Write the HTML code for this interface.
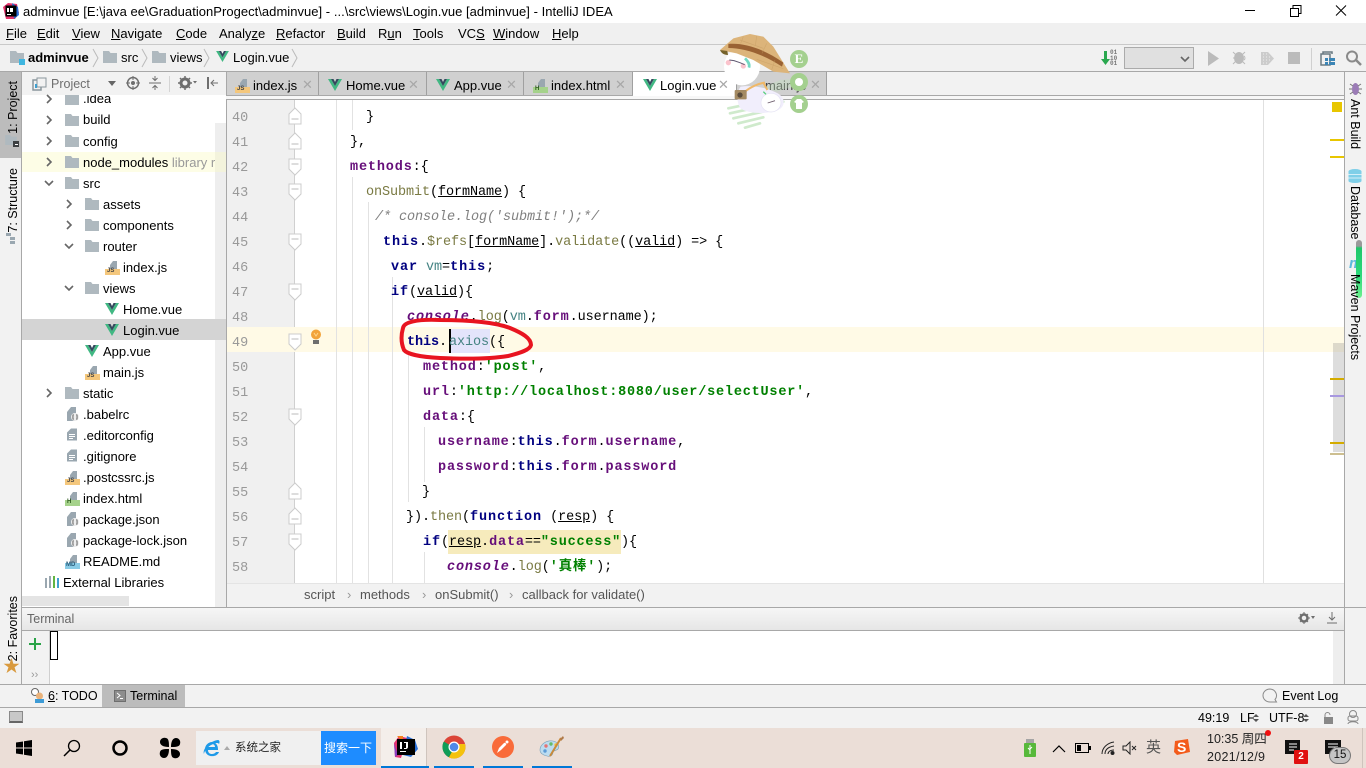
<!DOCTYPE html>
<html lang="zh"><head><meta charset="utf-8"><title>Login.vue</title>
<style>
*{box-sizing:border-box}
html,body{margin:0;padding:0;width:1366px;height:768px;overflow:hidden;background:#f2f2f2}
body{position:relative;font-family:"Liberation Sans","Noto Sans CJK SC",sans-serif;font-size:13px;color:#000}
.a,.t,.c,.ln,svg.i{position:absolute}
.t{white-space:nowrap;line-height:16px}
.c{font-family:"Liberation Mono","Noto Sans CJK SC",monospace;font-size:13.5px;white-space:pre;line-height:18px;color:#000;letter-spacing:-.1px;margin-top:1px}
.ln{font-family:"Liberation Mono",monospace;font-size:13.5px;color:#999;left:232px;line-height:18px;margin-top:2px}
.k{color:#000080;font-weight:bold;letter-spacing:.9px}.p{color:#660e7a;font-weight:bold;letter-spacing:.85px}.s{color:#008000;font-weight:bold;letter-spacing:.8px}
.f{color:#7a7a43}.u{text-decoration:underline}.v{color:#458383}
.m u{text-decoration:underline}
.vr{position:absolute;writing-mode:vertical-rl;white-space:nowrap;line-height:16px;font-size:12.5px}
.vl{position:absolute;writing-mode:vertical-rl;transform:rotate(180deg);white-space:nowrap;line-height:16px;font-size:12.5px}
.tab{position:absolute;top:72px;height:24px;background:#d0d0d0;border-right:1px solid #a0a0a0}
.x{position:absolute;color:#a8a8a8;font-size:13px;line-height:16px}
.mk{position:absolute;left:1330px;width:14px;height:2px}
.g{position:absolute;width:1px;background:#e2e2e2}
.wrap{position:absolute;left:0;top:1px;width:0;height:0}
</style></head><body>
<svg width="0" height="0" style="position:absolute">
<defs>
<symbol id="folder" viewBox="0 0 14 12"><path d="M0 0h6l1.500 2H14v10H0z" fill="#afb9bf"/></symbol>
<symbol id="vue" viewBox="0 0 14 12"><path d="M0 0h3l4 7 4-7h3L7 12z" fill="#41b883"/><path d="M3 0h2.500L7 3l1.500-3H11L7 7z" fill="#35495e"/></symbol>
<symbol id="doc" viewBox="0 0 10 12"><path d="M0 4l4-4h6v12H0z" fill="#9aa7b0"/><path d="M2 6h6M2 8h6M2 10h4" stroke="#fff" stroke-width="1"/></symbol>
<symbol id="chev" viewBox="0 0 8 10"><path d="M2 1l4 4-4 4" fill="none" stroke="#666" stroke-width="1.600"/></symbol>
<symbol id="down" viewBox="0 0 10 8"><path d="M1 2l4 4 4-4" fill="none" stroke="#666" stroke-width="1.600"/></symbol>
<symbol id="foldd" viewBox="0 0 14 18"><path d="M1 1h12v10l-6 6-6-6z" fill="#fff" stroke="#ccc"/><path d="M3.500 6h7" stroke="#bbb"/></symbol>
<symbol id="foldu" viewBox="0 0 14 18"><path d="M1 17h12V7L7 1 1 7z" fill="#fff" stroke="#ccc"/><path d="M3.500 12h7" stroke="#bbb"/></symbol>
<symbol id="json" viewBox="0 0 12 14"><path d="M0 5l4-5h5v8H8v6H0z" fill="#9aa7b0"/><circle cx="8" cy="10" r="4" fill="#eee"/><path d="M6.500 7.500c-1 0 0 2.500-1 2.500 1 0 0 2.500 1 2.500M9.500 7.500c1 0 0 2.500 1 2.500-1 0 0 2.500-1 2.500" fill="none" stroke="#555"/></symbol>
</defs></svg>

<!-- title bar -->
<div class="a" style="left:0;top:0;width:1366px;height:23px;background:#fff"></div>
<svg class="i" style="left:3px;top:3px" width="16" height="16" viewBox="0 0 16 16"><path d="M0 4l5-4 9 1 2 9-4 6H3z" fill="#e8336d"/><path d="M9 0l6 4 1 8-5 4z" fill="#2a6fd6"/><rect x="2.500" y="2.500" width="11" height="11" fill="#000"/><path d="M4 5h2v4H4zM7 5h3v4H7zM4 11h4v1H4z" fill="#fff"/></svg>
<div class="t" style="left:23px;top:4px;font-size:13px;letter-spacing:.03px">adminvue [E:\java ee\GraduationProgect\adminvue] - ...\src\views\Login.vue [adminvue] - IntelliJ IDEA</div>
<svg class="i" style="left:1240px;top:0" width="126" height="23" viewBox="0 0 126 23"><path d="M5 10.500h10" stroke="#000"/><path d="M50.500 8.500h8v8h-8zM53 8V5.500h8v8h-2.500" fill="none" stroke="#000"/><path d="M96 5.500l10 10M106 5.500l-10 10" stroke="#000"/></svg>

<!-- menu -->
<div class="a" style="left:0;top:23px;width:1366px;height:22px;background:#f0f0f0;border-bottom:1px solid #c9c9c9"></div>
<div class="m">
<div class="t" style="left:6px;top:26px"><u>F</u>ile</div>
<div class="t" style="left:37px;top:26px"><u>E</u>dit</div>
<div class="t" style="left:72px;top:26px"><u>V</u>iew</div>
<div class="t" style="left:111px;top:26px"><u>N</u>avigate</div>
<div class="t" style="left:176px;top:26px"><u>C</u>ode</div>
<div class="t" style="left:219px;top:26px">Analy<u>z</u>e</div>
<div class="t" style="left:276px;top:26px"><u>R</u>efactor</div>
<div class="t" style="left:337px;top:26px"><u>B</u>uild</div>
<div class="t" style="left:378px;top:26px">R<u>u</u>n</div>
<div class="t" style="left:413px;top:26px"><u>T</u>ools</div>
<div class="t" style="left:458px;top:26px">VC<u>S</u></div>
<div class="t" style="left:493px;top:26px"><u>W</u>indow</div>
<div class="t" style="left:552px;top:26px"><u>H</u>elp</div>
</div>

<!-- nav bar -->
<div class="a" style="left:0;top:45px;width:1366px;height:27px;background:#f1f1f1;border-bottom:1px solid #a8a8a8"></div>
<svg class="i" style="left:10px;top:51px" width="16" height="14"><use href="#folder" width="14" height="12"/><rect x="9" y="8" width="6" height="6" fill="#40b6e0"/></svg>
<div class="t" style="left:28px;top:50px;font-weight:bold">adminvue</div>
<svg class="i" style="left:92px;top:48px" width="8" height="20"><path d="M1 1l5 9-5 9" fill="none" stroke="#bbb"/></svg>
<svg class="i" style="left:103px;top:51px" width="14" height="12"><use href="#folder"/></svg>
<div class="t" style="left:121px;top:50px">src</div>
<svg class="i" style="left:141px;top:48px" width="8" height="20"><path d="M1 1l5 9-5 9" fill="none" stroke="#bbb"/></svg>
<svg class="i" style="left:152px;top:51px" width="14" height="12"><use href="#folder"/></svg>
<div class="t" style="left:170px;top:50px">views</div>
<svg class="i" style="left:203px;top:48px" width="8" height="20"><path d="M1 1l5 9-5 9" fill="none" stroke="#bbb"/></svg>
<svg class="i" style="left:216px;top:51px" width="13" height="11"><use href="#vue" width="13" height="11"/></svg>
<div class="t" style="left:233px;top:50px">Login.vue</div>
<svg class="i" style="left:291px;top:48px" width="8" height="20"><path d="M1 1l5 9-5 9" fill="none" stroke="#bbb"/></svg>

<!-- run toolbar -->
<svg class="i" style="left:1100px;top:50px" width="20" height="18"><path d="M4 1h3v8h3l-4.500 6L1 9h3z" fill="#2aa84f"/></svg>
<div class="t" style="left:1110px;top:50px;font-size:6px;line-height:5.500px;color:#777;font-weight:bold;white-space:pre-line;font-family:'Liberation Mono',monospace">01
10
01</div>
<div class="a" style="left:1124px;top:47px;width:70px;height:22px;background:#e0e0e0;border:1px solid #ababab"></div>
<svg class="i" style="left:1180px;top:55px" width="10" height="8"><use href="#down" width="10" height="8"/></svg>
<svg class="i" style="left:1207px;top:51px" width="13" height="15"><path d="M1 0l11 7.500L1 15z" fill="#bbb"/></svg>
<svg class="i" style="left:1232px;top:50px" width="16" height="16"><ellipse cx="7" cy="8" rx="5" ry="6" fill="#bbb"/><path d="M1 2l3 3M1 8h3M1 14l3-3M13 2l-3 3M13 14l-3-3" stroke="#bbb"/><path d="M12 6a2.500 2.500 0 0 1 0 4" fill="none" stroke="#bbb"/></svg>
<svg class="i" style="left:1260px;top:51px" width="15" height="15"><path d="M1 1l7 0 6 6.500L8 14H1z" fill="#ccc"/><path d="M3 3h1M6 3h1M3 6h1M6 6h1M9 6h1M3 9h1M6 9h1M9 9h1M3 12h1M6 12h1" stroke="#eee"/></svg>
<div class="a" style="left:1288px;top:52px;width:12px;height:12px;background:#bbb"></div>
<div class="a" style="left:1311px;top:48px;width:1px;height:22px;background:#d0d0d0"></div>
<svg class="i" style="left:1320px;top:51px" width="15" height="15"><path d="M3 3V1h9v2M1 3h9v11H1z" fill="none" stroke="#6b7a82" stroke-width="1.500"/><g fill="#3c85b5"><rect x="5" y="7" width="3" height="3"/><rect x="9" y="7" width="3" height="3"/><rect x="12" y="7" width="3" height="3"/><rect x="5" y="11" width="3" height="3"/><rect x="9" y="11" width="3" height="3"/><rect x="12" y="11" width="3" height="3"/></g></svg>
<svg class="i" style="left:1345px;top:50px" width="17" height="16"><circle cx="7" cy="6.500" r="5" fill="none" stroke="#8a8a8a" stroke-width="2"/><path d="M11 10l5 5" stroke="#8a8a8a" stroke-width="2.500"/></svg>

<!-- left stripe -->
<div class="a" style="left:0;top:72px;width:22px;height:612px;background:#f2f2f2;border-right:1px solid #a8a8a8"></div>
<div class="a" style="left:0;top:72px;width:22px;height:86px;background:#bcbcbc;border-right:1px solid #a8a8a8"></div>
<div class="vl" style="left:5px;top:81px">1: Project</div>
<svg class="i" style="left:5px;top:135px" width="14" height="12"><use href="#folder" width="12" height="10"/><rect x="8" y="6" width="6" height="6" fill="#3c3f41"/><rect x="10" y="9" width="3" height="1" fill="#fff"/></svg>
<div class="vl" style="left:5px;top:168px">7: Structure</div>
<svg class="i" style="left:5px;top:232px" width="13" height="13"><path d="M1 1h5v3H1zM5 5h5v3H5zM5 9h5v3H5z" fill="#9aa7b0"/></svg>
<div class="vl" style="left:5px;top:596px">2: Favorites</div>
<div class="a" style="left:3px;top:658px;font-size:17px;line-height:18px;color:#d99a3e">★</div>

<!-- project panel -->
<div class="a" style="left:22px;top:72px;width:204px;height:23px;background:#f2f2f2"></div>
<div class="a" style="left:22px;top:95px;width:204px;height:512px;background:#fff"></div>
<div class="a" style="left:215px;top:123px;width:11px;height:484px;background:#eeeeee"></div>
<div class="a" style="left:22px;top:596px;width:107px;height:10px;background:#e4e4e4"></div>
<div class="a" style="left:22px;top:152px;width:204px;height:20px;background:#fdfde6"></div>
<div class="a" style="left:215px;top:152px;width:11px;height:20px;background:#f3f3dc"></div>
<div class="a" style="left:22px;top:319px;width:204px;height:21px;background:#d4d4d4"></div>
<svg class="i" style="left:32px;top:77px" width="15" height="15"><path d="M1 3h8v10H1z" fill="none" stroke="#8a969c" stroke-width="1.500"/><rect x="5" y="1" width="9" height="9" fill="#f2f2f2" stroke="#8a969c"/><path d="M3 7h2v4H3z" fill="#40a0d0"/></svg>
<div class="t" style="left:51px;top:76px;color:#6e6e6e;font-size:12.500px">Project</div>
<svg class="i" style="left:108px;top:81px" width="9" height="6"><path d="M0 0h8L4 5z" fill="#666"/></svg>
<svg class="i" style="left:126px;top:76px" width="14" height="14"><circle cx="7" cy="7" r="5.500" fill="none" stroke="#6e6e6e" stroke-width="1.500"/><circle cx="7" cy="7" r="2" fill="#6e6e6e"/><path d="M7 0v4M7 10v4M0 7h4M10 7h4" stroke="#6e6e6e"/></svg>
<svg class="i" style="left:148px;top:76px" width="14" height="14"><path d="M1 7h12M7 0v4M4.500 2L7 4.500 9.500 2M7 14v-4M4.500 12L7 9.500 9.500 12" fill="none" stroke="#6e6e6e"/></svg>
<div class="a" style="left:169px;top:76px;width:1px;height:16px;background:#d4d4d4"></div>
<svg class="i" style="left:178px;top:76px" width="20" height="14"><circle cx="7" cy="7" r="4" fill="none" stroke="#6e6e6e" stroke-width="3"/><path d="M7 0v14M0 7h14M2 2l10 10M12 2L2 12" stroke="#6e6e6e" stroke-width="1.500" stroke-dasharray="2 10 2 0"/><path d="M15 5h4l-2 2.500z" fill="#6e6e6e"/></svg>
<svg class="i" style="left:206px;top:76px" width="13" height="14"><path d="M1 1h2v12H1z" fill="#6e6e6e"/><path d="M12 7H6M8 4L5 7l3 3" fill="none" stroke="#6e6e6e"/></svg>

<!-- tree chevrons -->
<svg class="i" style="left:45px;top:94px" width="8" height="10"><use href="#chev" width="8" height="10"/></svg>
<svg class="i" style="left:45px;top:115px" width="8" height="10"><use href="#chev" width="8" height="10"/></svg>
<svg class="i" style="left:45px;top:136px" width="8" height="10"><use href="#chev" width="8" height="10"/></svg>
<svg class="i" style="left:45px;top:157px" width="8" height="10"><use href="#chev" width="8" height="10"/></svg>
<svg class="i" style="left:44px;top:179px" width="10" height="8"><use href="#down" width="10" height="8"/></svg>
<svg class="i" style="left:65px;top:199px" width="8" height="10"><use href="#chev" width="8" height="10"/></svg>
<svg class="i" style="left:65px;top:220px" width="8" height="10"><use href="#chev" width="8" height="10"/></svg>
<svg class="i" style="left:64px;top:242px" width="10" height="8"><use href="#down" width="10" height="8"/></svg>
<svg class="i" style="left:64px;top:284px" width="10" height="8"><use href="#down" width="10" height="8"/></svg>
<svg class="i" style="left:45px;top:388px" width="8" height="10"><use href="#chev" width="8" height="10"/></svg>
<!-- tree folders -->
<svg class="i" style="left:65px;top:95px" width="14" height="10"><svg y="-2" width="14" height="12"><use href="#folder"/></svg></svg>
<div class="wrap">
<svg class="i" style="left:65px;top:113px" width="14" height="12"><use href="#folder"/></svg>
<svg class="i" style="left:65px;top:134px" width="14" height="12"><use href="#folder"/></svg>
<svg class="i" style="left:65px;top:155px" width="14" height="12"><use href="#folder"/></svg>
<svg class="i" style="left:65px;top:176px" width="14" height="12"><use href="#folder"/></svg>
<svg class="i" style="left:85px;top:197px" width="14" height="12"><use href="#folder"/></svg>
<svg class="i" style="left:85px;top:218px" width="14" height="12"><use href="#folder"/></svg>
<svg class="i" style="left:85px;top:239px" width="14" height="12"><use href="#folder"/></svg>
<svg class="i" style="left:85px;top:281px" width="14" height="12"><use href="#folder"/></svg>
<svg class="i" style="left:65px;top:386px" width="14" height="12"><use href="#folder"/></svg>
</div>
<!-- tree file icons -->
<svg class="i" style="left:105px;top:260px" width="15" height="15"><path d="M5 5l3-4h4v8H5z" fill="#9aa7b0"/><rect y="9" width="15" height="6" fill="#f4c77c"/></svg>
<div class="t" style="left:107px;top:268px;font-size:6px;line-height:7px;font-weight:bold;color:#444">JS</div>
<svg class="i" style="left:105px;top:303px" width="14" height="12"><use href="#vue"/></svg>
<svg class="i" style="left:105px;top:324px" width="14" height="12"><use href="#vue"/></svg>
<svg class="i" style="left:85px;top:345px" width="14" height="12"><use href="#vue"/></svg>
<svg class="i" style="left:85px;top:365px" width="15" height="15"><path d="M5 5l3-4h4v8H5z" fill="#9aa7b0"/><rect y="9" width="15" height="6" fill="#f4c77c"/></svg>
<div class="t" style="left:87px;top:373px;font-size:6px;line-height:7px;font-weight:bold;color:#444">JS</div>
<svg class="i" style="left:67px;top:407px" width="12" height="14"><use href="#json"/></svg>
<svg class="i" style="left:67px;top:428px" width="10" height="13"><use href="#doc" width="10" height="13"/></svg>
<svg class="i" style="left:67px;top:449px" width="10" height="13"><use href="#doc" width="10" height="13"/></svg>
<svg class="i" style="left:65px;top:470px" width="15" height="15"><path d="M5 5l3-4h4v8H5z" fill="#9aa7b0"/><rect y="9" width="15" height="6" fill="#f4c77c"/></svg>
<div class="t" style="left:67px;top:478px;font-size:6px;line-height:7px;font-weight:bold;color:#444">JS</div>
<svg class="i" style="left:65px;top:491px" width="15" height="15"><path d="M5 5l3-4h4v8H5z" fill="#9aa7b0"/><rect y="9" width="15" height="6" fill="#a5d28b"/></svg>
<div class="t" style="left:67px;top:499px;font-size:6px;line-height:7px;font-weight:bold;color:#2d5a1c">H</div>
<svg class="i" style="left:67px;top:512px" width="12" height="14"><use href="#json"/></svg>
<svg class="i" style="left:67px;top:533px" width="12" height="14"><use href="#json"/></svg>
<svg class="i" style="left:65px;top:554px" width="15" height="15"><path d="M5 5l3-4h4v8H5z" fill="#9aa7b0"/><rect y="9" width="15" height="6" fill="#89cbe6"/></svg>
<div class="t" style="left:66px;top:562px;font-size:6px;line-height:7px;font-weight:bold;color:#2b5c7a">MD</div>
<svg class="i" style="left:45px;top:575px" width="15" height="13"><g stroke-width="2"><path d="M1 3v10" stroke="#9aa7b0"/><path d="M5 1v12" stroke="#9aa7b0"/><path d="M9 1v12" stroke="#62b543"/><path d="M13 3v10" stroke="#40a0d0"/></g></svg>
<!-- tree labels -->
<div class="t" style="left:83px;top:95px;height:10px;overflow:hidden;line-height:8px">.idea</div>
<div class="wrap">
<div class="t" style="left:83px;top:111px">build</div>
<div class="t" style="left:83px;top:133px">config</div>
<div class="t" style="left:83px;top:154px;width:132px;overflow:hidden">node_modules <span style="color:#999">library root</span></div>
<div class="t" style="left:83px;top:175px">src</div>
<div class="t" style="left:103px;top:196px">assets</div>
<div class="t" style="left:103px;top:217px">components</div>
<div class="t" style="left:103px;top:238px">router</div>
<div class="t" style="left:123px;top:259px">index.js</div>
<div class="t" style="left:103px;top:280px">views</div>
<div class="t" style="left:123px;top:301px">Home.vue</div>
<div class="t" style="left:123px;top:322px">Login.vue</div>
<div class="t" style="left:103px;top:343px">App.vue</div>
<div class="t" style="left:103px;top:364px">main.js</div>
<div class="t" style="left:83px;top:385px">static</div>
<div class="t" style="left:83px;top:406px">.babelrc</div>
<div class="t" style="left:83px;top:427px">.editorconfig</div>
<div class="t" style="left:83px;top:448px">.gitignore</div>
<div class="t" style="left:83px;top:469px">.postcssrc.js</div>
<div class="t" style="left:83px;top:490px">index.html</div>
<div class="t" style="left:83px;top:511px">package.json</div>
<div class="t" style="left:83px;top:532px">package-lock.json</div>
<div class="t" style="left:83px;top:553px">README.md</div>
<div class="t" style="left:63px;top:574px">External Libraries</div>
</div>

<!-- tabs -->
<div class="a" style="left:226px;top:72px;width:1118px;height:24px;background:#f2f2f2;border-left:1px solid #a8a8a8"></div>
<div class="tab" style="left:226px;width:93px;border-left:1px solid #a8a8a8"></div>
<div class="tab" style="left:319px;width:108px"></div>
<div class="tab" style="left:427px;width:97px"></div>
<div class="tab" style="left:524px;width:109px"></div>
<div class="tab" style="left:633px;width:104px;background:#fff"></div>
<div class="tab" style="left:737px;width:90px"></div>
<div class="a" style="left:226px;top:95px;width:1118px;height:1px;background:#a8a8a8"></div>
<div class="a" style="left:633px;top:95px;width:104px;height:1px;background:#fff"></div>
<div class="a" style="left:226px;top:96px;width:1118px;height:3px;background:#f7f7f7"></div>
<div class="a" style="left:226px;top:99px;width:1118px;height:1px;background:#a8a8a8"></div>
<svg class="i" style="left:235px;top:78px" width="15" height="15"><path d="M5 5l3-4h4v8H5z" fill="#9aa7b0"/><rect y="9" width="15" height="6" fill="#f4c77c"/></svg>
<div class="t" style="left:237px;top:86px;font-size:6px;line-height:7px;font-weight:bold;color:#444">JS</div>
<div class="t" style="left:253px;top:78px">index.js</div><div class="x" style="left:302px;top:77px">✕</div>
<svg class="i" style="left:328px;top:79px" width="14" height="12"><use href="#vue"/></svg>
<div class="t" style="left:346px;top:78px">Home.vue</div><div class="x" style="left:408px;top:77px">✕</div>
<svg class="i" style="left:436px;top:79px" width="14" height="12"><use href="#vue"/></svg>
<div class="t" style="left:454px;top:78px">App.vue</div><div class="x" style="left:506px;top:77px">✕</div>
<svg class="i" style="left:533px;top:78px" width="15" height="15"><path d="M5 5l3-4h4v8H5z" fill="#9aa7b0"/><rect y="9" width="15" height="6" fill="#a5d28b"/></svg>
<div class="t" style="left:535px;top:86px;font-size:6px;line-height:7px;font-weight:bold;color:#2d5a1c">H</div>
<div class="t" style="left:551px;top:78px">index.html</div><div class="x" style="left:615px;top:77px">✕</div>
<svg class="i" style="left:643px;top:79px" width="14" height="12"><use href="#vue"/></svg>
<div class="t" style="left:660px;top:78px">Login.vue</div><div class="x" style="left:718px;top:77px">✕</div>
<div class="t" style="left:765px;top:78px;color:#444">main.js</div><div class="x" style="left:810px;top:77px">✕</div>

<!-- editor -->
<div class="a" style="left:226px;top:100px;width:1118px;height:483px;background:#fff"></div>
<div class="a" style="left:226px;top:100px;width:68px;height:483px;background:#f0f0f0"></div>
<div class="a" style="left:226px;top:100px;width:1px;height:507px;background:#a8a8a8"></div>
<div class="a" style="left:294px;top:100px;width:1px;height:483px;background:#d0d0d0"></div>
<div class="a" style="left:227px;top:327px;width:1117px;height:25px;background:#fffae6"></div>
<div class="a" style="left:1263px;top:100px;width:1px;height:483px;background:#e0e0e0"></div>
<!-- indent guides -->
<div class="g" style="left:336px;top:100px;height:483px"></div>
<div class="g" style="left:352px;top:177px;height:406px"></div>
<div class="g" style="left:368px;top:202px;height:381px"></div>
<div class="g" style="left:352px;top:100px;height:30px"></div>
<div class="g" style="left:392px;top:277px;height:306px"></div>
<div class="g" style="left:408px;top:352px;height:150px"></div>
<div class="g" style="left:424px;top:427px;height:55px"></div>
<div class="g" style="left:424px;top:552px;height:31px"></div>
<!-- highlight -->
<div class="a" style="left:449px;top:329px;width:41px;height:24px;background:#e3e4fb"></div>
<div class="a" style="left:449px;top:329px;width:2px;height:24px;background:#000"></div>
<div class="a" style="left:448px;top:530px;width:173px;height:24px;background:#f6ebbc"></div>
<!-- fold markers -->
<svg class="i" style="left:288px;top:107px" width="14" height="18"><use href="#foldu"/></svg>
<svg class="i" style="left:288px;top:132px" width="14" height="18"><use href="#foldu"/></svg>
<svg class="i" style="left:288px;top:158px" width="14" height="18"><use href="#foldd"/></svg>
<svg class="i" style="left:288px;top:183px" width="14" height="18"><use href="#foldd"/></svg>
<svg class="i" style="left:288px;top:233px" width="14" height="18"><use href="#foldd"/></svg>
<svg class="i" style="left:288px;top:283px" width="14" height="18"><use href="#foldd"/></svg>
<svg class="i" style="left:288px;top:333px" width="14" height="18"><use href="#foldd"/></svg>
<svg class="i" style="left:288px;top:408px" width="14" height="18"><use href="#foldd"/></svg>
<svg class="i" style="left:288px;top:482px" width="14" height="18"><use href="#foldu"/></svg>
<svg class="i" style="left:288px;top:507px" width="14" height="18"><use href="#foldu"/></svg>
<svg class="i" style="left:288px;top:533px" width="14" height="18"><use href="#foldd"/></svg>
<svg class="i" style="left:309px;top:329px" width="14" height="16"><circle cx="7" cy="5.500" r="5" fill="#f2a33a"/><path d="M5 4l2 3 2-3" fill="none" stroke="#ffd58a"/><rect x="4" y="11" width="6" height="4" fill="#6e6e6e"/></svg>
<!-- line numbers -->
<div class="ln" style="top:108px">40</div><div class="ln" style="top:133px">41</div><div class="ln" style="top:158px">42</div><div class="ln" style="top:183px">43</div><div class="ln" style="top:208px">44</div><div class="ln" style="top:233px">45</div><div class="ln" style="top:258px">46</div><div class="ln" style="top:283px">47</div><div class="ln" style="top:308px">48</div><div class="ln" style="top:333px">49</div><div class="ln" style="top:358px">50</div><div class="ln" style="top:383px">51</div><div class="ln" style="top:408px">52</div><div class="ln" style="top:433px">53</div><div class="ln" style="top:458px">54</div><div class="ln" style="top:483px">55</div><div class="ln" style="top:508px">56</div><div class="ln" style="top:533px">57</div><div class="ln" style="top:558px">58</div>
<!-- code -->
<div class="c" style="left:366px;top:108px">}</div>
<div class="c" style="left:350px;top:133px">},</div>
<div class="c" style="left:350px;top:158px"><span class="p">methods</span>:{</div>
<div class="c" style="left:366px;top:183px"><span class="f">onSubmit</span>(<span class="u">formName</span>) {</div>
<div class="c" style="left:375px;top:208px;color:#808080;font-style:italic">/* console.log('submit!');*/</div>
<div class="c" style="left:383px;top:233px"><span class="k">this</span>.<span class="f">$refs</span>[<span class="u">formName</span>].<span class="f">validate</span>((<span class="u">valid</span>) =&gt; {</div>
<div class="c" style="left:391px;top:258px"><span class="k">var</span> <span class="v">vm</span>=<span class="k">this</span>;</div>
<div class="c" style="left:391px;top:283px"><span class="k">if</span>(<span class="u">valid</span>){</div>
<div class="c" style="left:407px;top:308px"><span class="p" style="font-style:italic">console</span>.<span class="f">log</span>(<span class="v">vm</span>.<span class="p">form</span>.username);</div>
<div class="c" style="left:407px;top:333px"><span class="k" style="letter-spacing:-.1px">this</span>.<span class="v" style="margin-left:2px">axios</span>({</div>
<div class="c" style="left:423px;top:358px"><span class="p">method</span>:<span class="s">'post'</span>,</div>
<div class="c" style="left:423px;top:383px"><span class="p">url</span>:<span class="s">'http://localhost:8080/user/selectUser'</span>,</div>
<div class="c" style="left:423px;top:408px"><span class="p">data</span>:{</div>
<div class="c" style="left:438px;top:433px"><span class="p">username</span>:<span class="k">this</span>.<span class="p">form</span>.<span class="p">username</span>,</div>
<div class="c" style="left:438px;top:458px"><span class="p">password</span>:<span class="k">this</span>.<span class="p">form</span>.<span class="p">password</span></div>
<div class="c" style="left:422px;top:483px">}</div>
<div class="c" style="left:406px;top:508px">}).<span class="f">then</span>(<span class="k">function</span> (<span class="u">resp</span>) {</div>
<div class="c" style="left:423px;top:533px"><span class="k">if</span>(<span class="u">resp</span>.<span class="p">data</span>==<span class="s">"success"</span>){</div>
<div class="c" style="left:447px;top:558px"><span class="p" style="font-style:italic">console</span>.<span class="f">log</span>(<span class="s">'真棒'</span>);</div>
<!-- error stripe -->
<div class="a" style="left:1333px;top:343px;width:11px;height:109px;background:rgba(130,130,130,.27)"></div>
<div class="a" style="left:1332px;top:102px;width:10px;height:10px;background:#e8c600"></div>
<div class="mk" style="top:139px;background:#e8c600"></div>
<div class="mk" style="top:156px;background:#e8c600"></div>
<div class="mk" style="top:378px;background:#d4ac00"></div>
<div class="mk" style="top:395px;background:#a898e0"></div>
<div class="mk" style="top:442px;background:#d4ac00"></div>
<div class="mk" style="top:453px;background:#cdbf90"></div>
<!-- red circle -->
<svg class="i" style="left:0;top:0" width="1366" height="768"><path d="M403 328C404 322 416 319 440 320C470 320 494 322 510 328C522 333 531 338 531 345C530 350 520 353 508 356C490 359 462 359 440 358C420 357 407 354 404 350C401 343 401 335 403 328Z" fill="none" stroke="#e81420" stroke-width="4"/></svg>
<!-- breadcrumb -->
<div class="a" style="left:227px;top:583px;width:1117px;height:24px;background:#f2f2f2;border-top:1px solid #e4e4e4"></div>
<div class="t" style="left:304px;top:587px;color:#555">script</div>
<div class="t" style="left:347px;top:587px;color:#999">›</div>
<div class="t" style="left:360px;top:587px;color:#555">methods</div>
<div class="t" style="left:422px;top:587px;color:#999">›</div>
<div class="t" style="left:435px;top:587px;color:#555">onSubmit()</div>
<div class="t" style="left:509px;top:587px;color:#999">›</div>
<div class="t" style="left:522px;top:587px;color:#555">callback for validate()</div>

<!-- right stripe -->
<div class="a" style="left:1344px;top:72px;width:22px;height:612px;background:#f2f2f2;border-left:1px solid #a8a8a8"></div>
<svg class="i" style="left:1349px;top:81px" width="13" height="15"><ellipse cx="6.500" cy="8" rx="3.500" ry="6" fill="#9b7cb6"/><path d="M1 3l3 2M12 3l-3 2M0 8h3M13 8h-3M1 13l3-2M12 13l-3-2" stroke="#777"/></svg>
<div class="vr" style="left:1347px;top:99px">Ant Build</div>
<svg class="i" style="left:1348px;top:169px" width="14" height="14"><ellipse cx="7" cy="2.500" rx="6.500" ry="2.500" fill="#7fcfe8"/><rect x=".5" y="2" width="13" height="10" fill="#7fcfe8"/><ellipse cx="7" cy="12" rx="6.500" ry="2" fill="#7fcfe8"/><path d="M.5 5.500h13M.5 9h13" stroke="#d4eff8"/></svg>
<div class="vr" style="left:1347px;top:186px">Database</div>
<div class="t" style="left:1349px;top:256px;font-style:italic;font-weight:bold;font-size:15px;color:#5db9dc">m</div>
<div class="a" style="left:1356px;top:240px;width:6px;height:58px;border-radius:3px;background:linear-gradient(#9a9a9a 0,#9a9a9a 6px,#1fc76a 8px,#2bd97a 60%,#6ef08e 100%)"></div>
<div class="vr" style="left:1347px;top:274px">Maven Projects</div>

<!-- terminal -->
<div class="a" style="left:22px;top:607px;width:1344px;height:1px;background:#a8a8a8"></div>
<div class="a" style="left:22px;top:608px;width:1322px;height:23px;background:linear-gradient(#f6f6f6,#e6e6e6);border-bottom:1px solid #a8a8a8"></div>
<div class="t" style="left:27px;top:611px;color:#666;font-size:12.500px">Terminal</div>
<svg class="i" style="left:1298px;top:611px" width="20" height="14"><circle cx="6" cy="7" r="3.500" fill="none" stroke="#6e6e6e" stroke-width="2.500"/><path d="M6 1v12M0 7h12M2 3l8 8M10 3l-8 8" stroke="#6e6e6e" stroke-dasharray="2 8 2 0"/><path d="M13 5h4l-2 3z" fill="#6e6e6e"/></svg>
<svg class="i" style="left:1326px;top:611px" width="12" height="14"><path d="M6 1v8M3 6l3 3 3-3M1 12h10" fill="none" stroke="#6e6e6e"/></svg>
<div class="a" style="left:22px;top:631px;width:28px;height:53px;background:#f2f2f2;border-right:1px solid #cfcfcf"></div>
<div class="a" style="left:50px;top:631px;width:1294px;height:53px;background:#fff"></div>
<div class="a" style="left:1333px;top:631px;width:11px;height:53px;background:#eeeeee"></div>
<svg class="i" style="left:28px;top:637px" width="14" height="14"><path d="M7 1v12M1 7h12" stroke="#29a347" stroke-width="2"/></svg>
<div class="t" style="left:31px;top:667px;font-size:11px;color:#999">››</div>
<div class="a" style="left:50px;top:631px;width:8px;height:29px;background:#fff;border:1px solid #000"></div>

<!-- bottom tool bar -->
<div class="a" style="left:0;top:684px;width:1366px;height:23px;background:#f2f2f2;border-top:1px solid #a8a8a8"></div>
<svg class="i" style="left:31px;top:688px" width="14" height="15"><circle cx="4" cy="4" r="3.500" fill="#fff" stroke="#666"/><circle cx="8.500" cy="8" r="3.500" fill="#eab37c"/><rect x="4" y="11" width="9" height="4" fill="#3d9bd6"/></svg>
<div class="t" style="left:48px;top:688px;font-size:12.500px"><u>6</u>: TODO</div>
<div class="a" style="left:102px;top:685px;width:83px;height:22px;background:#bcbcbc"></div>
<svg class="i" style="left:114px;top:690px" width="12" height="12"><rect x=".5" y=".5" width="11" height="11" fill="#8d8d8d" stroke="#6e6e6e"/><path d="M3 3l3 2.500L3 8M6 8.500h3" fill="none" stroke="#fff"/></svg>
<div class="t" style="left:130px;top:688px;font-size:12.500px">Terminal</div>
<svg class="i" style="left:1261px;top:688px" width="18" height="16"><path d="M9 1a7 6.500 0 1 0 0 13h6.500l-1.500-2.500A7 6.500 0 0 0 9 1z" fill="none" stroke="#8a8a8a"/></svg>
<div class="t" style="left:1282px;top:688px;font-size:12.500px">Event Log</div>
<!-- status bar -->
<div class="a" style="left:0;top:707px;width:1366px;height:21px;background:#f2f2f2;border-top:1px solid #a8a8a8"></div>
<div class="a" style="left:9px;top:711px;width:14px;height:12px;background:#c8c8c8;border:1px solid #8a8a8a;border-bottom:2px solid #666"></div>
<div class="t" style="left:1198px;top:710px;font-size:12.500px">49:19</div>
<div class="t" style="left:1240px;top:710px;font-size:12.500px">LF</div>
<svg class="i" style="left:1253px;top:713px" width="7" height="10"><path d="M0 4h6L3 1zM0 6h6L3 9z" fill="#555"/></svg>
<div class="t" style="left:1269px;top:710px;font-size:12.500px">UTF-8</div>
<svg class="i" style="left:1303px;top:713px" width="7" height="10"><path d="M0 4h6L3 1zM0 6h6L3 9z" fill="#555"/></svg>
<svg class="i" style="left:1323px;top:712px" width="11" height="12"><path d="M2 5V3a2.500 2.500 0 0 1 5 0" fill="none" stroke="#888"/><rect x="1" y="5" width="9" height="7" fill="#888"/></svg>
<svg class="i" style="left:1345px;top:710px" width="16" height="15"><circle cx="8" cy="4" r="3.500" fill="none" stroke="#888"/><rect x="3" y="6" width="10" height="5" rx="2" fill="none" stroke="#888"/><path d="M3 14c0-3 10-3 10 0" fill="none" stroke="#888"/></svg>

<!-- taskbar -->
<div class="a" style="left:0;top:728px;width:1366px;height:40px;background:#ebded7"></div>
<svg class="i" style="left:16px;top:740px" width="16" height="16"><path d="M0 2.500l7-1v6H0zM8 1.300l8-1.300v7.500H8zM0 8.500h7v6l-7-1zM8 8.500h8V16l-8-1.300z" fill="#000"/></svg>
<svg class="i" style="left:63px;top:739px" width="18" height="18"><circle cx="11" cy="7" r="5.500" fill="none" stroke="#000" stroke-width="1.300"/><path d="M7 11l-6 6" stroke="#000" stroke-width="1.500"/></svg>
<svg class="i" style="left:111px;top:739px" width="18" height="18"><circle cx="9" cy="9" r="6.500" fill="none" stroke="#000" stroke-width="2.500"/></svg>
<svg class="i" style="left:159px;top:737px" width="22" height="22" viewBox="0 0 22 22"><g fill="#000"><path d="M10 10C4 10 1 8 1 5s3-5 6-4c3 .5 3 5 3 9z"/><path d="M12 10c0-6 2-9 5-9s5 3 4 6c-.5 3-5 3-9 3z"/><path d="M12 12c6 0 9 2 9 5s-3 5-6 4c-3-.5-3-5-3-9z"/><path d="M10 12c0 6-2 9-5 9s-5-3-4-6c.5-3 5-3 9-3z"/></g></svg>
<div class="a" style="left:196px;top:731px;width:125px;height:34px;background:#f0f0f0"></div>
<svg class="i" style="left:202px;top:739px" width="18" height="18" viewBox="0 0 18 18"><path d="M16 11H6c0 5 6 5 8 2h3c-2 6-14 6-14-3 0-5 6-9 10-6 3 2 3 5 3 7zM6 8h7c0-4-6-4-7 0z" fill="#1e9ae8"/><path d="M2 15C0 10 8 2 16 1c1.500 0 2 2 1 4C16 2 6 6 3 12c-.5 1-1 2-1 3z" fill="#1e9ae8"/></svg>
<svg class="i" style="left:224px;top:746px" width="7" height="5"><path d="M0 4h6L3 0z" fill="#aaa"/></svg>
<div class="t" style="left:235px;top:740px;font-size:11.500px;color:#222">系统之家</div>
<div class="a" style="left:321px;top:731px;width:55px;height:34px;background:#1e8cff"></div>
<div class="t" style="left:324px;top:740px;font-size:12px;color:#fff">搜索一下</div>
<div class="a" style="left:381px;top:728px;width:45px;height:38px;background:#f4eeea"></div>
<div class="a" style="left:426px;top:728px;width:1px;height:38px;background:#cfc4bd"></div>
<div class="a" style="left:381px;top:766px;width:48px;height:2px;background:#0078d7"></div>
<svg class="i" style="left:393px;top:735px" width="26" height="24" viewBox="0 0 26 24"><path d="M1 8L6 1l8 2L8 23 2 22z" fill="#e3336f"/><path d="M1 8l4 12-3 2z" fill="#8a3fc0"/><path d="M14 1l8 4 3 9-7 8-8-2z" fill="#2a6fd6"/><path d="M4 1h6v6z" fill="#f58220"/><rect x="4" y="4" width="18" height="16" fill="#000"/><path d="M7 7h2v7H7zM11 7h4v5c0 1-1 2-2 2h-2v-1h2V8h-2zM7 16h6v1H7z" fill="#fff"/></svg>
<div class="a" style="left:434px;top:766px;width:40px;height:2px;background:#0078d7"></div>
<svg class="i" style="left:442px;top:735px" width="24" height="24" viewBox="0 0 24 24"><circle cx="12" cy="12" r="11.500" fill="#db4437"/><path d="M12 12L1.500 7a11.500 11.500 0 0 0 5 15z" fill="#0f9d58" /><path d="M12 12l-5 10.500A11.500 11.500 0 0 0 23 9H12z" fill="#f4c20d"/><path d="M2 6.500L1 12a11 11 0 0 0 6 10l5-9z" fill="#0f9d58"/><circle cx="12" cy="12" r="5.500" fill="#fff"/><circle cx="12" cy="12" r="4.300" fill="#4e89e8"/></svg>
<div class="a" style="left:483px;top:766px;width:40px;height:2px;background:#0078d7"></div>
<svg class="i" style="left:492px;top:736px" width="22" height="22" viewBox="0 0 22 22"><circle cx="11" cy="11" r="11" fill="#f96b3a"/><path d="M5 17l2-5 5-5c1-1 3 1 2 2l-5 5z" fill="#fff"/><circle cx="15" cy="6" r="1.500" fill="#fff"/></svg>
<div class="a" style="left:532px;top:766px;width:40px;height:2px;background:#0078d7"></div>
<svg class="i" style="left:539px;top:735px" width="26" height="24" viewBox="0 0 26 24"><path d="M1 15C1 9 8 5 14 6c5 1 7 5 5 8-2 2-4 1-5 3 0 3-2 5-6 4-4-1-7-3-7-6z" fill="#bcdcf0" stroke="#7aa0b8" stroke-width=".6"/><circle cx="7" cy="11" r="1.700" fill="#e57373"/><circle cx="12" cy="9" r="1.700" fill="#66bb6a"/><circle cx="17" cy="10" r="1.700" fill="#fbc02d"/><circle cx="6" cy="16" r="1.700" fill="#5c9bd6"/><path d="M11 21L22 3" stroke="#c98a3a" stroke-width="2"/><path d="M21 4l3-3 1 2-3 3z" fill="#b07a4a"/></svg>
<!-- tray -->
<svg class="i" style="left:1024px;top:739px" width="12" height="18"><rect x="2" y="0" width="8" height="5" fill="#a5a5a5"/><rect y="4" width="12" height="14" rx="1" fill="#57b83a"/><path d="M6 6v9M4 9l2 2M8 8l-2 2" stroke="#fff"/></svg>
<svg class="i" style="left:1052px;top:744px" width="14" height="9"><path d="M1 8l6-6 6 6" fill="none" stroke="#000" stroke-width="1.200"/></svg>
<svg class="i" style="left:1075px;top:743px" width="16" height="10"><rect x=".5" y=".5" width="13" height="9" fill="none" stroke="#000"/><rect x="2" y="2" width="4" height="6" fill="#000"/><rect x="14" y="3" width="2" height="4" fill="#000"/></svg>
<svg class="i" style="left:1101px;top:741px" width="14" height="14" viewBox="0 0 14 14" fill="none" stroke="#222"><path d="M1 13C1 7 6 2 13 1M4 13c0-4 3-7 9-8M7 13c0-2 2-4 6-4"/><circle cx="11.500" cy="12" r="1.500" fill="#222"/></svg>
<svg class="i" style="left:1122px;top:741px" width="15" height="14"><path d="M1 5h3l4-4v12l-4-4H1z" fill="none" stroke="#222"/><path d="M10 5l4 4M14 5l-4 4" stroke="#222"/></svg>
<div class="t" style="left:1146px;top:740px;font-size:15px;color:#555">英</div>
<svg class="i" style="left:1174px;top:739px" width="16" height="17"><path d="M1 2l13-2 2 13-13 3-3-3z" fill="#f35b1b"/></svg>
<div class="t" style="left:1177px;top:739px;font-size:14px;font-weight:bold;color:#fff">S</div>
<div class="t" style="left:1207px;top:731px;font-size:12.500px;color:#222">10:35 周四</div>
<div class="t" style="left:1207px;top:749px;font-size:12.500px;color:#222;letter-spacing:.3px">2021/12/9</div>
<div class="a" style="left:1265px;top:730px;width:6px;height:6px;border-radius:3px;background:#f01010"></div>
<svg class="i" style="left:1285px;top:739px" width="17" height="17"><rect x="1" y="1" width="14" height="14" fill="#111"/><path d="M0 1v14" stroke="#111" stroke-width="2"/><path d="M4 5h8M4 8h8M4 11h5" stroke="#fff"/></svg>
<div class="a" style="left:1294px;top:750px;width:14px;height:14px;background:#e01010;border-radius:1px;color:#fff;font-size:10px;line-height:14px;text-align:center;font-weight:bold">2</div>
<svg class="i" style="left:1325px;top:740px" width="17" height="14"><rect width="16" height="14" fill="#111"/><path d="M3 4h10M3 7h10" stroke="#fff"/></svg>
<div class="a" style="left:1329px;top:747px;width:22px;height:17px;background:#c5c5c5;border:1px solid #777;border-radius:9px;color:#111;font-size:11.500px;line-height:15px;text-align:center">15</div>
<div class="a" style="left:1362px;top:728px;width:1px;height:40px;background:#cfc4bd"></div>

<!-- mascot: coordinates are 3x of page px, origin (720,30) -->
<svg class="i" style="left:720px;top:30px" width="100" height="105" viewBox="0 0 300 315">
<g fill="none" stroke="#bfe3bb" stroke-width="8" opacity=".75" stroke-linecap="round">
<path d="M25 235L170 205M30 250L190 215M40 265L150 240M55 280L130 262M75 293L120 280"/></g>
<path d="M130 172l50-22 50-5-10 25-50 15z" fill="#bfe3bb" opacity=".35"/>
<ellipse cx="66" cy="110" rx="54" ry="56" fill="#fff"/>
<path d="M62 170C85 166 125 168 165 186 200 200 198 232 170 242 130 254 85 250 62 236 48 215 50 185 62 170z" fill="#f1eefc"/>
<ellipse cx="153" cy="218" rx="30" ry="28" fill="#fff" stroke="#e4e2f3" stroke-width="2"/>
<path d="M143 219l22-7" stroke="#6a5a6a" stroke-width="2.500"/>
<path d="M75 185C90 172 115 160 135 158" fill="none" stroke="#efb869" stroke-width="6"/>
<path d="M130 158l12 22" stroke="#efb869" stroke-width="6"/>
<rect x="44" y="180" width="36" height="28" rx="3" fill="#a48a63"/><circle cx="60" cy="195" r="8" fill="#5a4c3c"/>
<path d="M130 185l8 8" stroke="#57d07c" stroke-width="4"/>
<circle cx="25" cy="98" r="8" fill="#fbc3cc"/><circle cx="70" cy="108" r="8" fill="#fbc3cc"/>
<path d="M28 90l14 2 18 6 14 6" stroke="#5f5770" stroke-width="3" fill="none"/>
<path d="M75 85c10 10 15 18 12 28" stroke="#73d8c2" stroke-width="8" fill="none"/>
<path d="M0 60L40 25 90 12 130 20 160 50 185 90 210 130 160 125 100 90 50 70z" fill="#dcb47a"/>
<path d="M25 42C70 38 130 55 190 98L186 110C130 72 70 54 25 54z" fill="#9a6233"/>
<path d="M0 60l22 3 2 12C12 75 4 70 0 60z" fill="#75622a"/>
<g stroke="#c29a60" stroke-width="2" opacity=".5"><path d="M70 20l-8 20M110 18l-4 30M140 40l-14 30M165 90l-10 30"/><path d="M60 30l70 25M110 88l80 28"/></g>
</svg>
<div class="a" style="left:790px;top:50px;width:18px;height:18px;border-radius:9px;background:#a4d08f;color:#fff;font-family:'Liberation Serif',serif;font-weight:bold;font-size:13px;line-height:18px;text-align:center">E</div>
<div class="a" style="left:790px;top:73px;width:18px;height:18px;border-radius:9px;background:#a4d08f"></div>
<div class="a" style="left:795px;top:78px;width:8px;height:8px;border-radius:4px;background:#fff"></div>
<div class="a" style="left:790px;top:95px;width:18px;height:18px;border-radius:9px;background:#a4d08f"></div>
<svg class="i" style="left:794px;top:99px" width="10" height="10"><path d="M3 0h4l3 3-2 1v6H2V4L0 3z" fill="#fff"/></svg>
</body></html>
